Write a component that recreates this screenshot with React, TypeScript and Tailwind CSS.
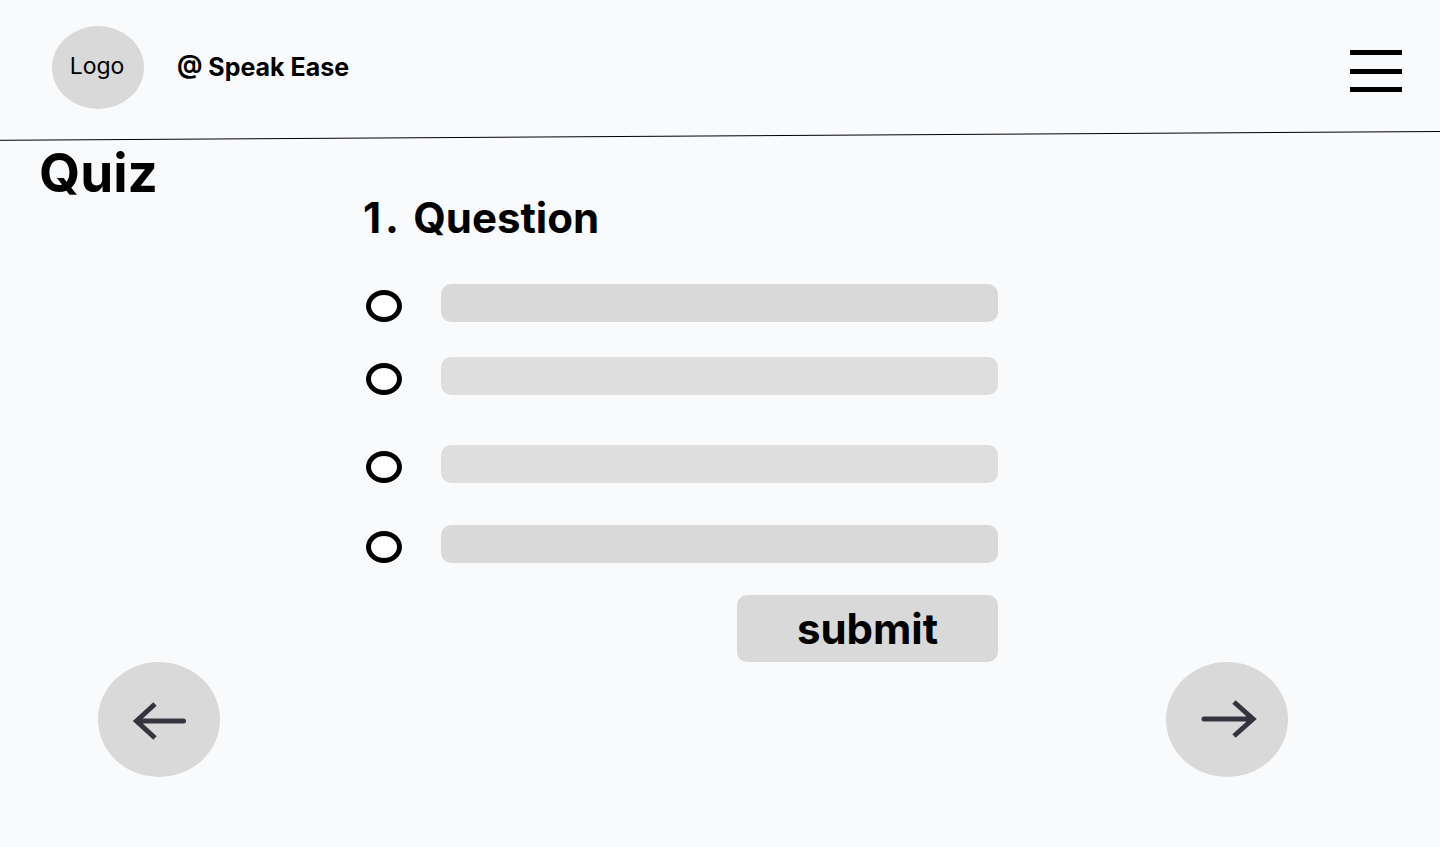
import { useState } from "react";

const answers = [
  { id: "answer-1", label: "Answer 1", bar: "bg-[#d9d9d9]", row: "" },
  { id: "answer-2", label: "Answer 2", bar: "bg-[#dedede]", row: "mt-[35px]" },
  { id: "answer-3", label: "Answer 3", bar: "bg-[#dedede]", row: "mt-[50px]" },
  { id: "answer-4", label: "Answer 4", bar: "bg-[#d9d9d9]", row: "mt-[42px]" },
];

function Header() {
  return (
    <header>
      <div className="flex items-center justify-between pt-[26px] pr-[38px] pb-[22px] pl-[52px]">
        <a href="#home" className="flex items-center gap-[33px]">
          <span className="flex h-[83px] w-[92px] items-center justify-center rounded-[50%] bg-[#d9d9d9] pr-[2px] pb-[3px] text-[23px] leading-[28px]">
            Logo
          </span>
          <span className="pb-[2px] text-[25px] leading-[30px] font-bold">@ Speak Ease</span>
        </a>
        <button type="button" aria-label="Menu" className="pt-[6px]">
          <svg width="52" height="42" viewBox="0 0 52 42" shapeRendering="crispEdges" className="block">
            <rect y="0" width="52" height="5" />
            <rect y="19" width="52" height="5" />
            <rect y="37" width="52" height="5" />
          </svg>
        </button>
      </div>
      <svg viewBox="0 0 1440 10" preserveAspectRatio="none" className="block h-[10px] w-full" aria-hidden="true">
        <line x1="0" y1="9.3" x2="1440" y2="0.5" stroke="#000" strokeWidth="1" />
      </svg>
    </header>
  );
}

function Quiz() {
  const [selected, setSelected] = useState("");

  return (
    <form className="ml-[25%] max-w-[638px] pl-[3px]" onSubmit={(event) => event.preventDefault()}>
      <fieldset>
        <legend className="flex gap-[14px] text-[42px] leading-[52px] font-bold">
          <span className="flex gap-[4px]">
            <span>1</span>
            <span>.</span>
          </span>
          <span>Question</span>
        </legend>
        <div className="pt-[40px] pl-[3px]">
          {answers.map((answer) => (
            <div key={answer.id} className={`flex items-end gap-[39px] ${answer.row}`}>
              <input
                type="radio"
                id={answer.id}
                name="answer"
                aria-label={answer.label}
                checked={selected === answer.id}
                onChange={() => setSelected(answer.id)}
                className="h-[32px] w-[36px] shrink-0 appearance-none rounded-[50%] border-5 border-black bg-white checked:bg-[#34343f]"
              />
              <label htmlFor={answer.id} className={`h-[38px] flex-1 rounded-[10px] ${answer.bar}`} />
            </div>
          ))}
        </div>
      </fieldset>
      <div className="mt-[32px] flex justify-end">
        <button
          type="submit"
          className="h-[67px] w-[261px] rounded-[10px] bg-[#d9d9d9] text-[42px] leading-[52px] font-bold"
        >
          submit
        </button>
      </div>
    </form>
  );
}

function Pager() {
  return (
    <nav className="flex justify-between pr-[152px] pl-[98px]" aria-label="Questions">
      <button type="button" aria-label="Previous question" className="rounded-[50%] bg-[#d9d9d9]">
        <svg width="122" height="115" viewBox="0 0 122 115" fill="none" stroke="#34343f" strokeWidth="5" className="block">
          <path d="M85.5 59H42" strokeLinecap="round" />
          <path d="M57 42L38.5 59L57 76" />
          <path d="M37 59L45 53V65Z" fill="#34343f" stroke="none" />
        </svg>
      </button>
      <button type="button" aria-label="Next question" className="rounded-[50%] bg-[#d9d9d9]">
        <svg width="122" height="115" viewBox="0 0 122 115" fill="none" stroke="#34343f" strokeWidth="5" className="block">
          <path d="M38 57H84" strokeLinecap="round" />
          <path d="M68 40L87 57L68 74" />
          <path d="M88 57L80 51V63Z" fill="#34343f" stroke="none" />
        </svg>
      </button>
    </nav>
  );
}

export default function App() {
  return (
    <div className="min-h-screen bg-[#f9fafc] font-['Inter',sans-serif] text-black">
      <Header />
      <main>
        <h1 className="-mb-[13px] pl-[39px] text-[53px] leading-[64px] font-bold">Quiz</h1>
        <Quiz />
        <Pager />
      </main>
    </div>
  );
}
